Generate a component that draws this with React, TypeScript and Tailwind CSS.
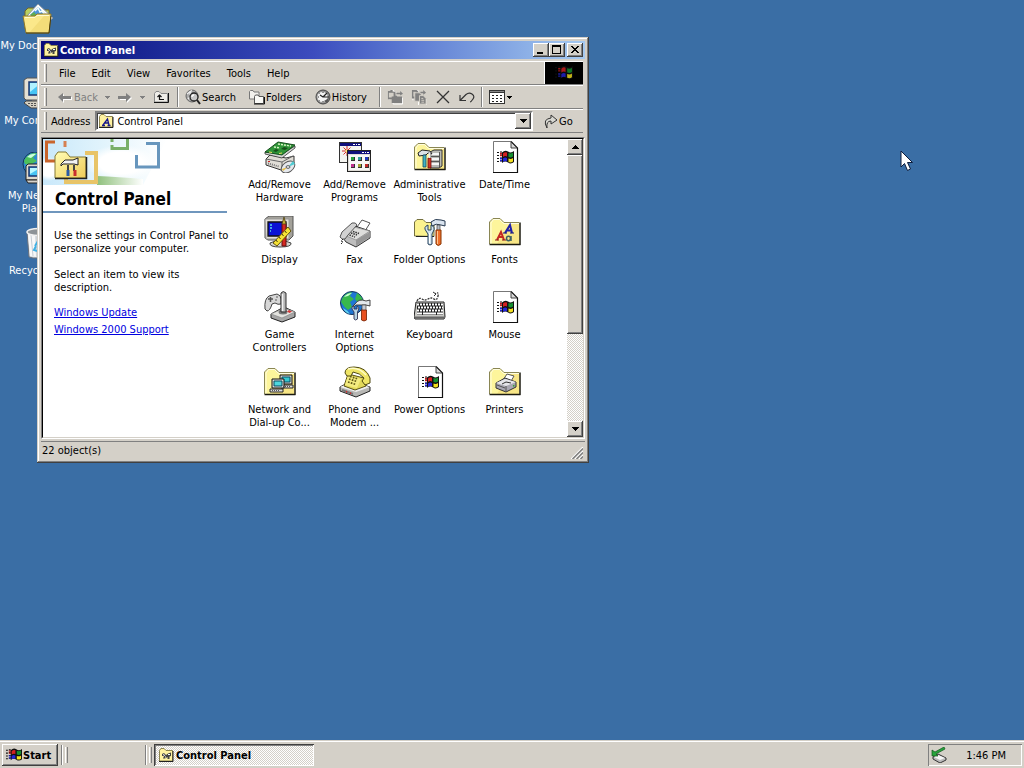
import React from 'react';
import type { ReactNode } from 'react';

type IconProps = { className?: string };

const raised =
  'bg-[#d4d0c8] shadow-[inset_-1px_-1px_#404040,inset_1px_1px_#fff,inset_-2px_-2px_#808080]';
const windowEdge =
  'shadow-[inset_-1px_-1px_#404040,inset_1px_1px_#d4d0c8,inset_-2px_-2px_#808080,inset_2px_2px_#fff]';
const dither =
  'bg-[repeating-conic-gradient(#ffffff_0_25%,#d4d0c8_0_50%)] bg-[length:2px_2px]';

function Svg({ size = 32, className = 'w-8 h-8', children }: { size?: number; className?: string; children: ReactNode }) {
  return (
    <svg viewBox={`0 0 ${size} ${size}`} className={`shrink-0 ${className}`} aria-hidden="true">
      {children}
    </svg>
  );
}

/* Shared shapes */

function FolderShape() {
  return (
    <g>
      <path d="M1 28.5V6L4 2.5H11L15 6.5H30.5V28.5Z" fill="#fdf59b" />
      <path d="M2 28V7L4.500 3.500H10.500L14.500 7.500H30" fill="none" stroke="#fffde0" />
      <path d="M20 8H30V28H8Z" fill="#f5dc78" opacity="0.6" />
      <path d="M0.500 28V6L4 2.500H11L15 6.500H30" fill="none" stroke="#8a8653" />
      <path d="M0.500 28.500H31.500M31 6.500V29" fill="none" stroke="#1b1a10" strokeWidth="1.500" />
    </g>
  );
}

function FlagShape() {
  return (
    <g>
      <path d="M0 3.500H2M3 3H5M0 6.500H2M3 6H5M0 9.500H2M3 9H5M0 12.500H2M3 12H5" stroke="#111" strokeWidth="1.200" />
      <path d="M3 4.500H6M3 6.500H6" stroke="#c01818" strokeWidth="1.300" />
      <path d="M3 9.500H6M3 11.500H6" stroke="#2020c0" strokeWidth="1.300" />
      <path d="M5 3.500Q8 0.500 11 2.500T17 2V13Q14 15.500 11 13.500T5 14Z" fill="#101010" />
      <path d="M6 4.500Q8 2.500 10 3.500V7.500Q8 6.500 6 8Z" fill="#d42020" />
      <path d="M11.500 4Q14 5 16 3.500V7.500Q14 9 11.500 8Z" fill="#149030" />
      <path d="M6 9.500Q8 8 10 9V12.500Q8 11.500 6 13Z" fill="#2424d8" />
      <path d="M11.500 9.500Q14 10.500 16 9V12.500Q14 14 11.500 13Z" fill="#f4e020" />
    </g>
  );
}

function ToolsShape() {
  return (
    <g>
      <path d="M4 6Q8 0 15 3L19 2V8L15 7H5Q3 9 2 8Z" fill="#e4e8ec" stroke="#333" strokeWidth="0.900" />
      <path d="M11 7H15V13H11Z" fill="#c8ccd4" stroke="#444" strokeWidth="0.700" />
      <path d="M10.500 12H15.500V22Q13 24 10.500 22Z" fill="#e85020" stroke="#702000" strokeWidth="0.800" />
      <path d="M1 11Q0 8 3 8V11H6V8Q9 9 7.500 12L6.500 14V21Q4.500 23 3 21V14Z" fill="#b8d4e4" stroke="#335" strokeWidth="0.900" />
    </g>
  );
}

/* Desktop icons */

function DocumentsIcon() {
  return (
    <Svg>
      <path d="M3 27V9L6 6H12L14 8H27V27Z" fill="#b9d060" stroke="#746426" />
      <path d="M5 14L16 2L31 16L22 23Z" fill="#fff" stroke="#8897a8" />
      <path d="M8 13L16 5L27 15L20 20Z" fill="#4f94d8" />
      <path d="M8 13L12 10L20 19L19 20Z" fill="#5fae50" />
      <path d="M13 9L16 6L18 10L20 9L23 13" fill="none" stroke="#f4ffff" strokeWidth="1.500" />
      <path d="M1 14H13L15 12H29L27 31H4Z" fill="#fbe88a" stroke="#8f7a2c" />
      <path d="M3 15.500H13L15 13.500H27" fill="none" stroke="#fffbd0" />
      <path d="M4 31H27L29 14" fill="none" stroke="#4b3d0c" />
      <path d="M22 14H28L26 30H8Z" fill="#ecd268" opacity="0.500" />
    </Svg>
  );
}

function ComputerIcon() {
  return (
    <Svg>
      <path d="M2 3L5 1H27L30 3V20L27 23H4L2 21Z" fill="#e4e0d4" stroke="#555" />
      <path d="M7 5H26V18H7Z" fill="#48c4f4" stroke="#183470" strokeWidth="1.500" />
      <path d="M8 6H19L8 15Z" fill="#b0f2ff" />
      <path d="M10 23H22V26H10Z" fill="#858585" />
      <path d="M4 24H29L31 31H9L2 26Z" fill="#d5d0c2" stroke="#444" />
      <path d="M6 26.500H27M9 28.500H28" stroke="#555" strokeDasharray="2 1" />
    </Svg>
  );
}

function NetworkPlacesIcon() {
  return (
    <Svg>
      <circle cx="13" cy="12" r="12" fill="#2a8ad0" stroke="#14365a" />
      <path d="M2 9Q6 0 15 1L11 6L15 9L8 13L3 12ZM18 3Q25 7 24 15L17 10Z" fill="#4cbf5c" />
      <path d="M5 5Q9 1 14 2L9 6Z" fill="#caffe0" />
      <path d="M4 14L6 12H26L28 14V26L26 28H4Z" fill="#dedace" stroke="#222" />
      <path d="M7 15H24V24H7Z" fill="#48c4f4" stroke="#183470" strokeWidth="1.500" />
      <path d="M8 16H18L8 22Z" fill="#b8f8ff" />
      <path d="M4 28H27L29 31H6Z" fill="#d8d4cc" stroke="#222" />
    </Svg>
  );
}

function RecycleIcon() {
  return (
    <Svg>
      <path d="M5 5L7 30L11 31H22L25 30L28 5Z" fill="#d6dade" stroke="#68707c" />
      <path d="M6 7L8 29L14 30L13 8Z" fill="#f8f8f8" />
      <path d="M9 8L11 29M15 8V29M20 8L18 29M24 8L21 29" stroke="#c4ccd4" />
      <ellipse cx="16.500" cy="5" rx="11.500" ry="3.500" fill="#8d9397" stroke="#f0f0f0" strokeWidth="1.500" />
      <path d="M13 19L16 14L19 18M20 18L21 23H17M15 24L12 23L14 19" fill="none" stroke="#3fb0e4" strokeWidth="2" />
    </Svg>
  );
}

/* Control panel applets */

function HardwareIcon() {
  return (
    <Svg>
      <path d="M2 18L6 14L22 17L30 15V22L20 30L2 24Z" fill="#e0ddd6" stroke="#333" />
      <path d="M2 18L18 21V29M18 21L29 15" fill="none" stroke="#666" />
      <path d="M4 22.500L15 25.500" stroke="#777" strokeWidth="2" strokeDasharray="1 1" />
      <path d="M4 20.500H6" stroke="#d02020" />
      <ellipse cx="24" cy="26" rx="7.500" ry="5" transform="rotate(-35 24 26)" fill="#e5e8ed" stroke="#555" />
      <path d="M24 26L29 20L31 23Z" fill="#51cbd2" />
      <path d="M24 26L19 30L18 28Z" fill="#e5bc45" />
      <ellipse cx="24" cy="26" rx="2" ry="1.300" fill="#fff" stroke="#555" />
      <path d="M1 11V13L18 17L31 7V5L18 13Z" fill="#d5d5d5" stroke="#333" strokeWidth="0.800" />
      <path d="M1 11L14 1L31 4L18 14Z" fill="#2f9438" stroke="#174f1e" />
      <path d="M14 3L27 5M10 6L16 7" stroke="#d9f4c5" strokeWidth="1.500" strokeDasharray="2 1" />
      <path d="M9 10L12 8L15 9L12 11ZM17 8L20 6L24 7L21 9Z" fill="#164d1a" />
      <path d="M5 11L8 11.500M15 12.500L18 12" stroke="#f0e060" />
    </Svg>
  );
}

function ProgramsIcon() {
  return (
    <Svg>
      <g shapeRendering="crispEdges">
        <path d="M0 1H23V22H0Z" fill="#333" />
        <path d="M1 2H22V21H1Z" fill="#f4f4f0" />
        <path d="M1 2H22V5H1Z" fill="#10107c" />
        <path d="M14 3H16V4H14ZM17 3H18V4H17ZM19 3H21V4H19Z" fill="#fff" />
      </g>
      <path d="M8 5V15M3 10H13M4.500 6.500L11.500 13.500M11.500 6.500L4.500 13.500" stroke="#d62b2b" strokeWidth="1" />
      <circle cx="8" cy="10" r="1.500" fill="#ffec70" />
      <g shapeRendering="crispEdges">
        <path d="M8 9H32V31H8Z" fill="#222" />
        <path d="M9 10H31V30H9Z" fill="#dedbd5" />
        <path d="M9 10H31V13H9Z" fill="#10107c" />
        <path d="M23 11H25V12H23ZM26 11H27V12H26ZM28 11H30V12H28Z" fill="#fff" />
        <path d="M10 14H30V29H10Z" fill="#f7f7f7" />
        <path d="M12 16H15V19H12Z" fill="#28a040" />
        <path d="M19 16H22V19H19Z" fill="#36a0a0" />
        <path d="M26 16H29V19H26Z" fill="#2038bc" />
        <path d="M12 23H15V26H12Z" fill="#c03090" />
        <path d="M19 23H22V26H19Z" fill="#a5a533" />
        <path d="M26 23H29V26H26Z" fill="#c42b2b" />
        <path d="M12 19H16V20H12ZM19 19H23V20H19ZM26 19H30V20H26ZM12 26H16V27H12ZM19 26H23V27H19ZM26 26H30V27H26ZM15 16H16V19H15ZM22 16H23V19H22ZM29 16H30V19H29ZM15 23H16V26H15ZM22 23H23V26H22ZM29 23H30V26H29Z" fill="#333" />
      </g>
    </Svg>
  );
}

function AdminToolsIcon() {
  return (
    <Svg>
      <FolderShape />
      <path d="M16 11L20 9H28V25L25 27H16Z" fill="#b9b9b4" stroke="#333" />
      <path d="M17 13H25M17 18H25M17 23H25" stroke="#f5f5f5" strokeWidth="2" />
      <path d="M17 15.500H25M17 20.500H25M25.500 11V26" stroke="#555" />
      <path d="M4 12L8 9L16 10L18 13L14 12L12 14L5 15Z" fill="#dce2e7" stroke="#222" />
      <path d="M9 14H12V26H9Z" fill="#42b4c4" stroke="#154d60" strokeWidth="0.800" />
      <path d="M14 17H17V27H14Z" fill="#d43424" stroke="#681010" strokeWidth="0.800" />
      <path d="M15.500 12V17" stroke="#eee" strokeWidth="2" />
    </Svg>
  );
}

function SystemFileIcon() {
  return (
    <Svg>
      <path d="M4 1H22L28 7V31H4Z" fill="#fff" />
      <path d="M4.500 31V0.500H22" fill="none" stroke="#777" />
      <path d="M22 0.500L28.500 7V31.500H4" fill="none" stroke="#111" strokeWidth="1.200" />
      <path d="M22 1V7H28Z" fill="#d8d8d8" stroke="#333" strokeWidth="0.900" />
      <g transform="translate(8 8)">
        <FlagShape />
      </g>
    </Svg>
  );
}

function DisplayIcon() {
  return (
    <Svg>
      <path d="M6 27Q16 22 27 27Q28 31 16 31Q5 31 6 27Z" fill="#d5d2cb" stroke="#444" />
      <path d="M1 3L5 0H29V20L25 24H4L1 22Z" fill="#a3a19a" stroke="#555" />
      <path d="M1 3H25V23H2Z" fill="#e4e1d9" stroke="#999" />
      <path d="M4 6H22V20H4Z" fill="#0a12d4" stroke="#111" strokeWidth="1.300" />
      <path d="M6 9H8M6 12H8M6 15H7" stroke="#5bd7ed" strokeWidth="1.500" />
      <path d="M18 8L20 3L22 8V30H18Z" fill="#d62921" stroke="#631010" />
      <path d="M18 8L20 1L22 8Z" fill="#c9b030" stroke="#50451c" strokeWidth="0.800" />
      <path d="M9 27L24 11L27 15L13 30Z" fill="#f7e236" stroke="#645509" />
      <path d="M12 24L13.500 26M15 21L16.500 23M18 18L19.500 20M21 15L22.500 17" stroke="#4c430c" />
    </Svg>
  );
}

function FaxIcon() {
  return (
    <Svg>
      <path d="M18 11L23 4L31 7L26 15Z" fill="#fff" stroke="#555" />
      <path d="M2 19L13 9L31 15V22L17 31L7 26Z" fill="#bdbdbd" stroke="#333" />
      <path d="M5 19L15 11L31 15L17 24Z" fill="#dededc" stroke="#888" strokeWidth="0.700" />
      <path d="M17 24V30L31 21V16Z" fill="#969696" />
      <path d="M1 21L3 16L13 7Q17 6 18 9L9 19L6 23Q3 24 1 21Z" fill="#d2d2d2" stroke="#555" />
      <path d="M12 17L18 19M14 15.500L20 17.500M10.500 19L16 21" stroke="#333" strokeWidth="1.500" strokeDasharray="1.500 1" />
      <path d="M4 23L2 25L4 26L2 28" fill="none" stroke="#222" strokeDasharray="2 1" />
    </Svg>
  );
}

function FolderOptionsIcon() {
  return (
    <Svg>
      <path d="M0.500 20V6L3 3.500H9L12 6.500H20V20.500Z" fill="#fbf28e" stroke="#74703f" />
      <path d="M2 20.500H20" stroke="#222" />
      <path d="M17 6Q21 2 27 4L31 5V10L27 9Q22 7 18 10Z" fill="#d9e3ee" stroke="#26384f" />
      <path d="M23 9H26V15H23Z" fill="#b6bdc7" stroke="#444" strokeWidth="0.700" />
      <path d="M22 14H27V28Q24 31 22 28Z" fill="#f0702c" stroke="#873400" />
      <path d="M23.500 15V28" stroke="#ffc490" />
      <path d="M12 15Q9 11 14 9V14H17V9Q22 11 19 16L18 18V28Q16 30 14 28V18Z" fill="#d3e4ee" stroke="#25415d" />
      <path d="M15.500 17V27" stroke="#fff" />
    </Svg>
  );
}

function FontsIcon() {
  return (
    <Svg>
      <FolderShape />
      <path d="M8 24L12 16L15 24M9 21H14" fill="none" stroke="#c42820" strokeWidth="2" />
      <path d="M6 24H10M13 24H17" stroke="#8c1814" />
      <path d="M16 17L21 9L23 17M18 14.500H23" fill="none" stroke="#2020a8" strokeWidth="2" />
      <path d="M14 17H18M21 17H25" stroke="#101078" />
      <ellipse cx="19.500" cy="22.500" rx="2" ry="2.200" fill="none" stroke="#3d5f63" strokeWidth="1.500" />
      <path d="M22 20V25" stroke="#3d5f63" strokeWidth="1.500" />
    </Svg>
  );
}

function GameIcon() {
  return (
    <Svg>
      <path d="M1 18Q0 8 5 5L13 3Q17 4 17 8V13Q14 14 11 12L8 13Q6 20 3 20Z" fill="#d7d7d7" stroke="#444" />
      <path d="M4 8H9M6.500 6V11" stroke="#555" strokeWidth="1.500" />
      <path d="M12 6H14M11 9H13" stroke="#888" strokeWidth="1.500" />
      <path d="M7 23L20 16L31 21V26L18 31L7 27Z" fill="#a6a6a6" stroke="#222" />
      <path d="M7 23L20 17L31 21L18 27Z" fill="#e3e3df" stroke="#888" strokeWidth="0.700" />
      <ellipse cx="19" cy="21" rx="4.500" ry="2.500" fill="#777" />
      <path d="M17 2Q19 -1 22 2V21H17Z" fill="#b6b6b6" stroke="#333" />
      <path d="M18.500 3V20" stroke="#f3f3f3" strokeWidth="1.500" />
      <path d="M25 19L28 20.500L25.500 22L23 20.500Z" fill="#cf3737" />
    </Svg>
  );
}

function InternetIcon() {
  return (
    <Svg>
      <circle cx="13" cy="12" r="11.500" fill="#1e76d4" stroke="#143358" />
      <path d="M2 11Q4 2 13 1L11 5L15 8L11 11L13 16L9 19Q5 16 2 11ZM18 2Q23 5 24 10L19 12L16 8Z" fill="#38b84c" />
      <path d="M5 6Q8 2 13 2L9 5Z" fill="#cdffd4" />
      <path d="M4 17Q8 19 11 23Q6 22 4 17Z" fill="#63d6f0" />
      <g transform="translate(12 7)">
        <ToolsShape />
      </g>
    </Svg>
  );
}

function KeyboardIcon() {
  return (
    <Svg>
      <path d="M3 10Q5 6 8 8T14 8T20 8T24 5T21 3" fill="none" stroke="#333" strokeWidth="1.300" strokeDasharray="2 1" />
      <path d="M19 1L22 3L20 5" fill="none" stroke="#333" />
      <path d="M2 11H30L31 26L30 28H1L0 26Z" fill="#c9c9c5" stroke="#222" />
      <path d="M1 26.500H31" stroke="#666" strokeWidth="2" />
      <path d="M3 13.500H29M3 16.500H29M3 19.500H29M3 22.500H29" stroke="#222" strokeWidth="3" />
      <path d="M3 13.500H29M4 16.500H29M3 19.500H29" stroke="#fff" strokeWidth="2" strokeDasharray="2 1" />
      <path d="M3 22.500H8M9 22.500H22M23 22.500H29" stroke="#fff" strokeWidth="2" />
    </Svg>
  );
}

function DialupIcon() {
  return (
    <Svg>
      <FolderShape />
      <path d="M16 9H28V18H16Z" fill="#d2d2ce" stroke="#111" />
      <path d="M18 11H26V16H18Z" fill="#35c9d1" stroke="#064b61" />
      <path d="M17 19H29V22H17Z" fill="#ddd" stroke="#222" />
      <path d="M8 13H20V22H8Z" fill="#deded9" stroke="#111" />
      <path d="M10 15H18V20H10Z" fill="#4ed8de" stroke="#064b61" />
      <path d="M6 23H19V26H6Z" fill="#ddd" stroke="#222" />
      <path d="M8 24.500H15M19 20.500H26" stroke="#555" strokeDasharray="1 1" />
    </Svg>
  );
}

function PhoneIcon() {
  return (
    <Svg>
      <path d="M1 21L12 15L31 21V25L17 31L1 25Z" fill="#b7b7b4" stroke="#222" />
      <path d="M1 21L12 16L31 21L17 26Z" fill="#eee" />
      <path d="M3 24L14 28" stroke="#777" strokeWidth="2" />
      <path d="M7 25.500L8 26M11 27L12 27.500" stroke="#e22626" strokeWidth="1.500" />
      <path d="M5 20L9 8L25 12L27 20L16 24Z" fill="#e2d95a" stroke="#5a5215" />
      <path d="M9 9L22 13L18 22L6 19Z" fill="#f4ec80" />
      <path d="M10 13L18 15.500M9 16L17 18.500M11 10.500L19 13" stroke="#615916" strokeWidth="1.700" strokeDasharray="1.700 1.200" />
      <path d="M6 7Q6 1 15 1Q27 1 31 12V17L26 19L23 15L25 12Q21 7 14 6L12 10H8Z" fill="#efe566" stroke="#4e4810" />
      <path d="M9 3Q19 0 27 9" fill="none" stroke="#fffcc9" strokeWidth="1.500" />
    </Svg>
  );
}

function PrintersIcon() {
  return (
    <Svg>
      <FolderShape />
      <path d="M14 14L18 8L25 10L21 17Z" fill="#fff" stroke="#555" />
      <path d="M7 17L16 12L27 16V21L17 26L7 22Z" fill="#a9a7b2" stroke="#333" />
      <path d="M7 17L16 13L27 16L17 20Z" fill="#e5e5e9" />
      <path d="M17 20V25M8 19L16 22" stroke="#555" />
      <path d="M13 18L17 16L22 17" fill="none" stroke="#333" />
      <path d="M24 20L25.500 19.500" stroke="#30a030" strokeWidth="1.500" />
    </Svg>
  );
}

/* Small icons */

function PanelSmallIcon({ className = 'w-4 h-4' }: IconProps) {
  return (
    <Svg size={16} className={className}>
      <path d="M1.500 14V3.500L3 1.500H6L8 3.500H14.500V14Z" fill="#fff2a0" stroke="#8d844e" />
      <path d="M1 14.500H15V4" fill="none" stroke="#222" />
      <path d="M4 7L6 6L8 8L10 6.500L13 5.500V9L11.500 9.500V12H9.500V10L7 11.500H5L6 9H4Z" fill="#444" />
      <path d="M5 7.500L7 8.500M10 7.500H12M7 10H8" stroke="#fff" />
    </Svg>
  );
}

function AddressIcon() {
  return (
    <Svg size={16} className="w-4 h-4">
      <path d="M1.500 14V3.500L3 1.500H6L8 3.500H14.500V14Z" fill="#fff2a0" stroke="#8d844e" />
      <path d="M1 14.500H15V4" fill="none" stroke="#222" />
      <path d="M5 12L9.500 6L11 12M6.500 10H11M4 12.500H7M9.500 12.500H12.500" fill="none" stroke="#18188c" strokeWidth="1.300" />
    </Svg>
  );
}

function ArrowIcon() {
  return (
    <Svg size={16} className="w-4 h-4">
      <path d="M2 9L7 5V8H15V11H7V14Z" fill="#fff" />
      <path d="M1 8L6 4V7H14V10H6V13Z" fill="#808080" />
    </Svg>
  );
}

function ForwardIcon() {
  return (
    <Svg size={16} className="w-4 h-4">
      <path d="M15 9L10 5V8H3V11H10V14Z" fill="#fff" />
      <path d="M14 8L9 4V7H1V10H9V13Z" fill="#808080" />
    </Svg>
  );
}

function UpFolderIcon() {
  return (
    <Svg size={16} className="w-4 h-4">
      <path d="M1.500 13V4.500L3 2.500H6L8 4.500H14.500V13Z" fill="#efede8" stroke="#888" />
      <path d="M1 13.500H15.500V4" fill="none" stroke="#111" />
      <path d="M6.500 6V10.500H11M4.500 8L6.500 6L8.500 8" fill="none" stroke="#111" strokeWidth="1.200" />
    </Svg>
  );
}

function SearchIcon() {
  return (
    <Svg size={16} className="w-4 h-4">
      <circle cx="7" cy="7" r="6" fill="#aaa" stroke="#666" />
      <path d="M2 5L6 2L5 5L8 7M3 10L5 8" fill="none" stroke="#eee" strokeWidth="1.300" />
      <circle cx="9" cy="8" r="4" fill="#c8c8c8" stroke="#222" strokeWidth="1.300" />
      <path d="M7 8Q7 6 9 6" fill="none" stroke="#fff" strokeWidth="1.300" />
      <path d="M12 11L15 15" stroke="#222" strokeWidth="2" />
    </Svg>
  );
}

function FoldersIcon() {
  return (
    <Svg size={16} className="w-4 h-4">
      <path d="M0.500 10V2.500L1.500 1.500H4L5 3H10V10Z" fill="#f1f0ec" stroke="#777" />
      <path d="M5.500 14.500V7.500L6.500 6H9L10 7.500H14.500V14.500Z" fill="#fafaf7" stroke="#555" />
      <path d="M5 15H15.500V8" fill="none" stroke="#111" />
    </Svg>
  );
}

function HistoryIcon() {
  return (
    <Svg size={16} className="w-4 h-4">
      <circle cx="8" cy="8" r="7" fill="#8a8a8a" stroke="#444" />
      <circle cx="7.500" cy="8" r="5.500" fill="#f4f4f4" stroke="#888" strokeWidth="0.700" />
      <path d="M8 8L12 4M8 8L5 6M8 8H14" stroke="#222" strokeWidth="1.200" />
      <path d="M8 3V4M8 12V13M3 8H4M4.500 4.500L5 5M4.500 11.500L5 11" stroke="#333" />
      <path d="M9 12L14 9L12 14Z" fill="#555" />
    </Svg>
  );
}

function MoveToIcon() {
  return (
    <Svg size={17} className="w-4 h-4">
      <path d="M2.500 11V3L4 1.500H7L8 3.500H10M6.500 16V9L8 7.500H10L11 9.500H16.500V16Z" fill="none" stroke="#fff" />
      <path d="M1 2H3L4 1H6V3H9V11H1Z" fill="#808080" />
      <path d="M2 4H7V9H2Z" fill="#d4d0c8" />
      <path d="M5 8H7L8 7H10L11 8H16V15H5Z" fill="#808080" />
      <path d="M10 4H14V2L17 5L14 7V5.500H10Z" fill="#808080" />
    </Svg>
  );
}

function CopyToIcon() {
  return (
    <Svg size={17} className="w-4 h-4">
      <path d="M2 12V2H8V5M8 17V9H13L17 12V17" fill="none" stroke="#fff" />
      <path d="M1 1H6L8 3V10H1Z" fill="#808080" />
      <path d="M2.500 3H5V8H2.500Z" fill="#d4d0c8" />
      <path d="M4 4H9L11 6V13H4Z" fill="#808080" stroke="#d4d0c8" />
      <path d="M9 7H13L16 10V16H9Z" fill="#808080" stroke="#d4d0c8" />
      <path d="M11 10H13M11 12H14M11 14H14" stroke="#d4d0c8" />
      <path d="M10 3H13V1L16 4L13 6V4.500H10Z" fill="#808080" />
    </Svg>
  );
}

function DeleteIcon() {
  return (
    <Svg size={16} className="w-4 h-4">
      <path d="M2 2L14 14M14 2L2 14" stroke="#333" strokeWidth="1.300" />
    </Svg>
  );
}

function UndoIcon() {
  return (
    <Svg size={16} className="w-4 h-4">
      <path d="M1 6V11.500H7M1.500 11L7 5.500Q10 3 13 5T14 10T11 13" fill="none" stroke="#333" strokeWidth="1.200" />
    </Svg>
  );
}

function ViewsIcon() {
  return (
    <Svg size={16} className="w-4 h-4">
      <g shapeRendering="crispEdges">
        <path d="M0 1H16V15H0Z" fill="#333" />
        <path d="M1 4H15V14H1Z" fill="#fff" />
        <path d="M3 6H5V7H3ZM7 6H9V7H7ZM11 6H13V7H11ZM3 9H5V10H3ZM7 9H9V10H7ZM11 9H13V10H11ZM3 12H5V13H3ZM7 12H9V13H7ZM11 12H13V13H11Z" fill="#222" />
        <path d="M1 2H15V3H1Z" fill="#888" />
      </g>
    </Svg>
  );
}

function GoIcon() {
  return (
    <Svg size={16} className="w-4 h-4">
      <path d="M4 15Q-1 6 8 5V2L14 7L8 11V8Q3 8 4 15Z" fill="#d8d8d2" stroke="#333" />
    </Svg>
  );
}

function Caret({ className = 'w-[7px] h-1 fill-black' }: IconProps) {
  return (
    <svg viewBox="0 0 7 4" className={`shrink-0 ${className}`} shapeRendering="crispEdges" aria-hidden="true">
      <path d="M0 0H7V1H6V2H5V3H4V4H3V3H2V2H1V1H0Z" />
    </svg>
  );
}

function SmallCaret({ className = 'fill-black' }: IconProps) {
  return (
    <svg viewBox="0 0 5 3" className={`w-[5px] h-[3px] shrink-0 ${className}`} shapeRendering="crispEdges" aria-hidden="true">
      <path d="M0 0H5V1H4V2H3V3H2V2H1V1H0Z" />
    </svg>
  );
}

function Flag({ className = 'w-4 h-4' }: IconProps) {
  return (
    <Svg size={17} className={className}>
      <FlagShape />
    </Svg>
  );
}

/* Window parts */

function Grip() {
  return <span className="w-[3px] self-stretch my-[2px] ml-[3px] mr-1 border-l border-l-white border-r border-r-[#808080] shrink-0" />;
}

function Separator() {
  return <span className="w-[2px] h-5 border-l border-l-[#808080] border-r border-r-white shrink-0" />;
}

function TitleButton({ label, children }: { label: string; children: ReactNode }) {
  return (
    <button type="button" aria-label={label} className={`w-4 h-[14px] ${raised}`}>
      <svg viewBox="0 0 16 14" className="w-4 h-[14px] block" shapeRendering="crispEdges" aria-hidden="true">
        {children}
      </svg>
    </button>
  );
}

function ToolButton({ icon, label, text }: { icon: ReactNode; label: string; text?: string }) {
  return (
    <button type="button" aria-label={label} className="flex items-center gap-px">
      {icon}
      {text && <span>{text}</span>}
    </button>
  );
}

const menus = ['File', 'Edit', 'View', 'Favorites', 'Tools', 'Help'];

const applets = [
  { name: 'Add/Remove Hardware', icon: <HardwareIcon /> },
  { name: 'Add/Remove Programs', icon: <ProgramsIcon /> },
  { name: 'Administrative Tools', icon: <AdminToolsIcon /> },
  { name: 'Date/Time', icon: <SystemFileIcon /> },
  { name: 'Display', icon: <DisplayIcon /> },
  { name: 'Fax', icon: <FaxIcon /> },
  { name: 'Folder Options', icon: <FolderOptionsIcon /> },
  { name: 'Fonts', icon: <FontsIcon /> },
  { name: 'Game Controllers', icon: <GameIcon /> },
  { name: 'Internet Options', icon: <InternetIcon /> },
  { name: 'Keyboard', icon: <KeyboardIcon /> },
  { name: 'Mouse', icon: <SystemFileIcon /> },
  { name: 'Network and Dial-up Co...', icon: <DialupIcon /> },
  { name: 'Phone and Modem ...', icon: <PhoneIcon /> },
  { name: 'Power Options', icon: <SystemFileIcon /> },
  { name: 'Printers', icon: <PrintersIcon /> },
];

const shortcuts = [
  { name: 'My Documents', icon: <DocumentsIcon /> },
  { name: 'My Computer', icon: <ComputerIcon /> },
  { name: 'My Network Places', icon: <NetworkPlacesIcon /> },
  { name: 'Recycle Bin', icon: <RecycleIcon /> },
];

function TitleBar() {
  return (
    <div className="flex items-center h-[18px] px-[2px] bg-linear-to-r from-[#08087a] via-[#3c4cbe] to-[#a6caf0]">
      <PanelSmallIcon />
      <h1 className="ml-px font-bold text-white flex-1 whitespace-nowrap">Control Panel</h1>
      <div className="flex">
        <TitleButton label="Minimize">
          <path d="M4 9H10V11H4Z" />
        </TitleButton>
        <TitleButton label="Maximize">
          <path d="M3 2H12V11H3ZM4 4V10H11V4Z" fillRule="evenodd" />
        </TitleButton>
      </div>
      <div className="ml-[2px] flex">
        <TitleButton label="Close">
          <path d="M4 3H6V4H7V5H9V4H10V3H12V4H11V5H10V6H9V7H10V8H11V9H12V10H10V9H9V8H7V9H6V10H4V9H5V8H6V7H7V6H6V5H5V4H4Z" />
        </TitleButton>
      </div>
    </div>
  );
}

function MenuBar() {
  return (
    <div className="flex h-6 border-t border-t-white border-b border-b-[#808080]">
      <Grip />
      <nav className="flex items-center flex-1">
        {menus.map((menu) => (
          <button key={menu} type="button" className="px-2">
            {menu}
          </button>
        ))}
      </nav>
      <div className="w-[39px] bg-black border-l border-l-white flex items-center justify-center">
        <Flag className="w-[18px] h-[18px] opacity-80" />
      </div>
    </div>
  );
}

function ToolBar() {
  return (
    <div className="flex items-center h-6 border-t border-t-white border-b border-b-[#808080]">
      <Grip />
      <div className="flex items-center gap-[7px] pl-[6px] text-[#808080]">
        <ToolButton icon={<ArrowIcon />} label="Back" text="Back" />
        <SmallCaret className="fill-[#808080]" />
        <ToolButton icon={<ForwardIcon />} label="Forward" />
        <SmallCaret className="fill-[#808080]" />
      </div>
      <div className="flex items-center gap-2 pl-2">
        <ToolButton icon={<UpFolderIcon />} label="Up" />
        <Separator />
      </div>
      <div className="flex items-center gap-[13px] px-[6px]">
        <ToolButton icon={<SearchIcon />} label="Search" text="Search" />
        <ToolButton icon={<FoldersIcon />} label="Folders" text="Folders" />
        <ToolButton icon={<HistoryIcon />} label="History" text="History" />
      </div>
      <div className="flex items-center pl-[6px]">
        <Separator />
        <div className="flex items-center gap-2 px-[6px]">
          <ToolButton icon={<MoveToIcon />} label="Move To" />
          <ToolButton icon={<CopyToIcon />} label="Copy To" />
          <ToolButton icon={<DeleteIcon />} label="Delete" />
          <ToolButton icon={<UndoIcon />} label="Undo" />
        </div>
        <Separator />
      </div>
      <button type="button" aria-label="Views" className="flex items-center gap-[2px] pl-[6px]">
        <ViewsIcon />
        <SmallCaret />
      </button>
    </div>
  );
}

function AddressBar() {
  return (
    <div className="flex items-center h-6 border-t border-t-white border-b border-b-[#808080]">
      <Grip />
      <label htmlFor="address" className="pr-[5px]">
        Address
      </label>
      <div className="flex flex-1 items-center h-5 bg-white border-2 border-t-[#808080] border-l-[#808080] border-r-white border-b-white shadow-[inset_1px_1px_#404040] pl-px">
        <AddressIcon />
        <select id="address" className="flex-1 appearance-none bg-transparent pl-[3px] outline-none">
          <option>Control Panel</option>
        </select>
        <span className={`w-4 h-4 flex items-center justify-center ${raised}`}>
          <Caret />
        </span>
      </div>
      <button type="button" className="flex items-center w-[50px] pl-[10px]">
        <GoIcon />
        Go
      </button>
    </div>
  );
}

function InfoPane() {
  return (
    <aside className="w-[199px] shrink-0">
      <svg viewBox="0 0 184 46" className="w-[184px] h-[46px] block" aria-hidden="true">
        <defs>
          <linearGradient id="sky">
            <stop offset="0" stopColor="#c9e8fa" />
            <stop offset="0.500" stopColor="#e2f4fc" />
            <stop offset="1" stopColor="#fff" />
          </linearGradient>
          <linearGradient id="grass">
            <stop offset="0" stopColor="#8fc07c" />
            <stop offset="1" stopColor="#fff" />
          </linearGradient>
          <linearGradient id="folder" x2="1" y2="1">
            <stop offset="0" stopColor="#fffdb5" />
            <stop offset="1" stopColor="#f0cc58" />
          </linearGradient>
          <radialGradient id="cloud">
            <stop offset="0" stopColor="#fff" />
            <stop offset="0.600" stopColor="#fff" />
            <stop offset="1" stopColor="#fff" stopOpacity="0" />
          </radialGradient>
        </defs>
        <path d="M0 0H124L100 46H0Z" fill="url(#sky)" />
        <ellipse cx="78" cy="24" rx="36" ry="18" fill="url(#cloud)" />
        <ellipse cx="6" cy="30" rx="14" ry="12" fill="url(#cloud)" />
        <path d="M54 37Q75 38 100 40V46H54Z" fill="url(#grass)" />
        <path d="M12 3H3.500V22H15" fill="none" stroke="#c9652c" strokeWidth="3" />
        <path d="M22 2V8" stroke="#d58052" strokeWidth="3" />
        <path d="M42 14H53V43H23V38" fill="none" stroke="#e8c468" strokeWidth="4" />
        <path d="M69 6V9.500H84.500V0M69 0V3" fill="none" stroke="#79b069" strokeWidth="3" />
        <path d="M103 4.500H115.500V28H93.500V16" fill="none" stroke="#6796bd" strokeWidth="3" />
        <path d="M12 39V17L15 13H23L27 18H43V39Z" fill="url(#folder)" stroke="#857832" />
        <path d="M12 39.500H43.500V18" fill="none" stroke="#222" strokeWidth="1.500" />
        <path d="M18 25L22 21H30L35 19V26L31 25H20L18 27Z" fill="#f2f2f2" stroke="#222" />
        <path d="M25 26V32M31 26V32" stroke="#444" strokeWidth="2" />
        <path d="M25 31V37" stroke="#2b5ba7" strokeWidth="3" />
        <path d="M32 31V37" stroke="#c92f2f" strokeWidth="3" />
      </svg>
      <h2 className="w-[184px] pl-3 text-[17px] leading-7 h-[28px] font-bold border-b-2 border-b-[#6f96bd]">Control Panel</h2>
      <div className="pl-[11px] pt-4">
        <p className="w-[180px]">Use the settings in Control Panel to personalize your computer.</p>
        <p className="w-[150px] mt-[13px]">Select an item to view its description.</p>
        <a href="#update" className="block w-fit mt-3 text-[#0000e0] underline">
          Windows Update
        </a>
        <a href="#support" className="block w-fit mt-1 text-[#0000e0] underline">
          Windows 2000 Support
        </a>
      </div>
    </aside>
  );
}

function ScrollBar() {
  return (
    <div className={`w-4 flex flex-col ${dither}`}>
      <button type="button" aria-label="Scroll up" className={`h-4 flex items-center justify-center ${raised}`}>
        <Caret className="w-[7px] h-1 fill-black rotate-180" />
      </button>
      <div className={`h-[179px] ${raised}`} />
      <button type="button" aria-label="Scroll down" className={`mt-auto h-4 flex items-center justify-center ${raised}`}>
        <Caret />
      </button>
    </div>
  );
}

function ControlPanelWindow() {
  return (
    <section className={`absolute left-[37px] top-[37px] w-[552px] p-1 bg-[#d4d0c8] ${windowEdge}`}>
      <TitleBar />
      <div className="pt-[2px] pr-[2px] pb-1">
        <MenuBar />
        <ToolBar />
        <AddressBar />
      </div>
      <div className="border border-t-[#808080] border-l-[#808080] border-r-white border-b-white">
        <div className="flex h-[300px] bg-white border border-t-black border-l-black border-r-[#d4d0c8] border-b-[#d4d0c8] overflow-hidden">
          <InfoPane />
          <ul className="flex-1 grid grid-cols-[repeat(4,75px)] auto-rows-[75px]">
            {applets.map((applet) => (
              <li key={applet.name} className="flex flex-col items-center gap-[5px] pt-[2px] text-center">
                {applet.icon}
                <span>{applet.name}</span>
              </li>
            ))}
          </ul>
          <ScrollBar />
        </div>
      </div>
      <footer className="mt-[2px] h-[18px] pl-px pr-[2px] flex items-center justify-between border-t border-t-[#808080]">
        <span>22 object(s)</span>
        <svg viewBox="0 0 12 12" className="w-3 h-3 self-end" aria-hidden="true">
          <path d="M0 12L12 0M4 12L12 4M8 12L12 8" stroke="#fff" strokeWidth="1.200" />
          <path d="M1.500 12L12 1.500M5.500 12L12 5.500M9.500 12L12 9.500" stroke="#808080" strokeWidth="1.500" />
        </svg>
      </footer>
    </section>
  );
}

function TaskBar() {
  return (
    <footer className="flex items-center h-7 px-[2px] pt-[2px] bg-[#d4d0c8] shadow-[inset_0_1px_#d4d0c8,inset_0_2px_#fff]">
      <button type="button" className={`flex items-center gap-px w-[56px] h-[22px] pl-1 font-bold ${raised}`}>
        <Flag />
        Start
      </button>
      <div className="flex gap-[2px] h-5 ml-[3px] w-[82px]">
        <Separator />
        <span className="w-[3px] my-[2px] border-l border-l-white border-r border-r-[#808080]" />
      </div>
      <div className="flex gap-[2px] h-5 ml-[2px] mr-[2px]">
        <Separator />
        <span className="w-[3px] my-[2px] border-l border-l-white border-r border-r-[#808080]" />
      </div>
      <button
        type="button"
        className={`flex items-center gap-[2px] w-[160px] h-[22px] pl-1 font-bold shadow-[inset_1px_1px_#404040,inset_-1px_-1px_#fff,inset_2px_2px_#808080] ${dither}`}
      >
        <PanelSmallIcon />
        Control Panel
      </button>
      <div className="ml-auto flex items-center justify-between w-[94px] h-[22px] pl-[3px] pr-4 shadow-[inset_1px_1px_#808080,inset_-1px_-1px_#fff]">
        <Svg size={16} className="w-4 h-4">
          <path d="M2 10L7 7L15 11V13L9 16L2 12Z" fill="#bbb" stroke="#333" />
          <path d="M3 10L7 8L14 11L9 13Z" fill="#f5f5f5" />
          <path d="M1 3V9H7L5 7L14 2L13 0L4 5Z" fill="#27a53d" stroke="#11551b" strokeWidth="0.700" />
        </Svg>
        <time>1:46 PM</time>
      </div>
    </footer>
  );
}

export default function App() {
  return (
    <div className="relative min-h-screen flex flex-col overflow-hidden bg-[#3a6ea5] font-['DejaVu_Sans_Condensed','DejaVu_Sans',sans-serif] text-[11px] leading-[13px] text-black">
      <ul className="flex-1 w-[75px] text-white">
        {shortcuts.map((item) => (
          <li key={item.name} className="flex flex-col items-center gap-[5px] h-[75px] pt-[2px] text-center">
            {item.icon}
            <span>{item.name}</span>
          </li>
        ))}
      </ul>
      <ControlPanelWindow />
      <svg viewBox="0 0 14 22" className="absolute left-[900px] top-[150px] w-[14px] h-[22px]" aria-hidden="true">
        <path d="M1 1V17L4.500 13.500L7.500 20.500L10.500 19L7.500 12.500H12.500Z" fill="#fff" stroke="#0c1c3c" />
      </svg>
      <TaskBar />
    </div>
  );
}
